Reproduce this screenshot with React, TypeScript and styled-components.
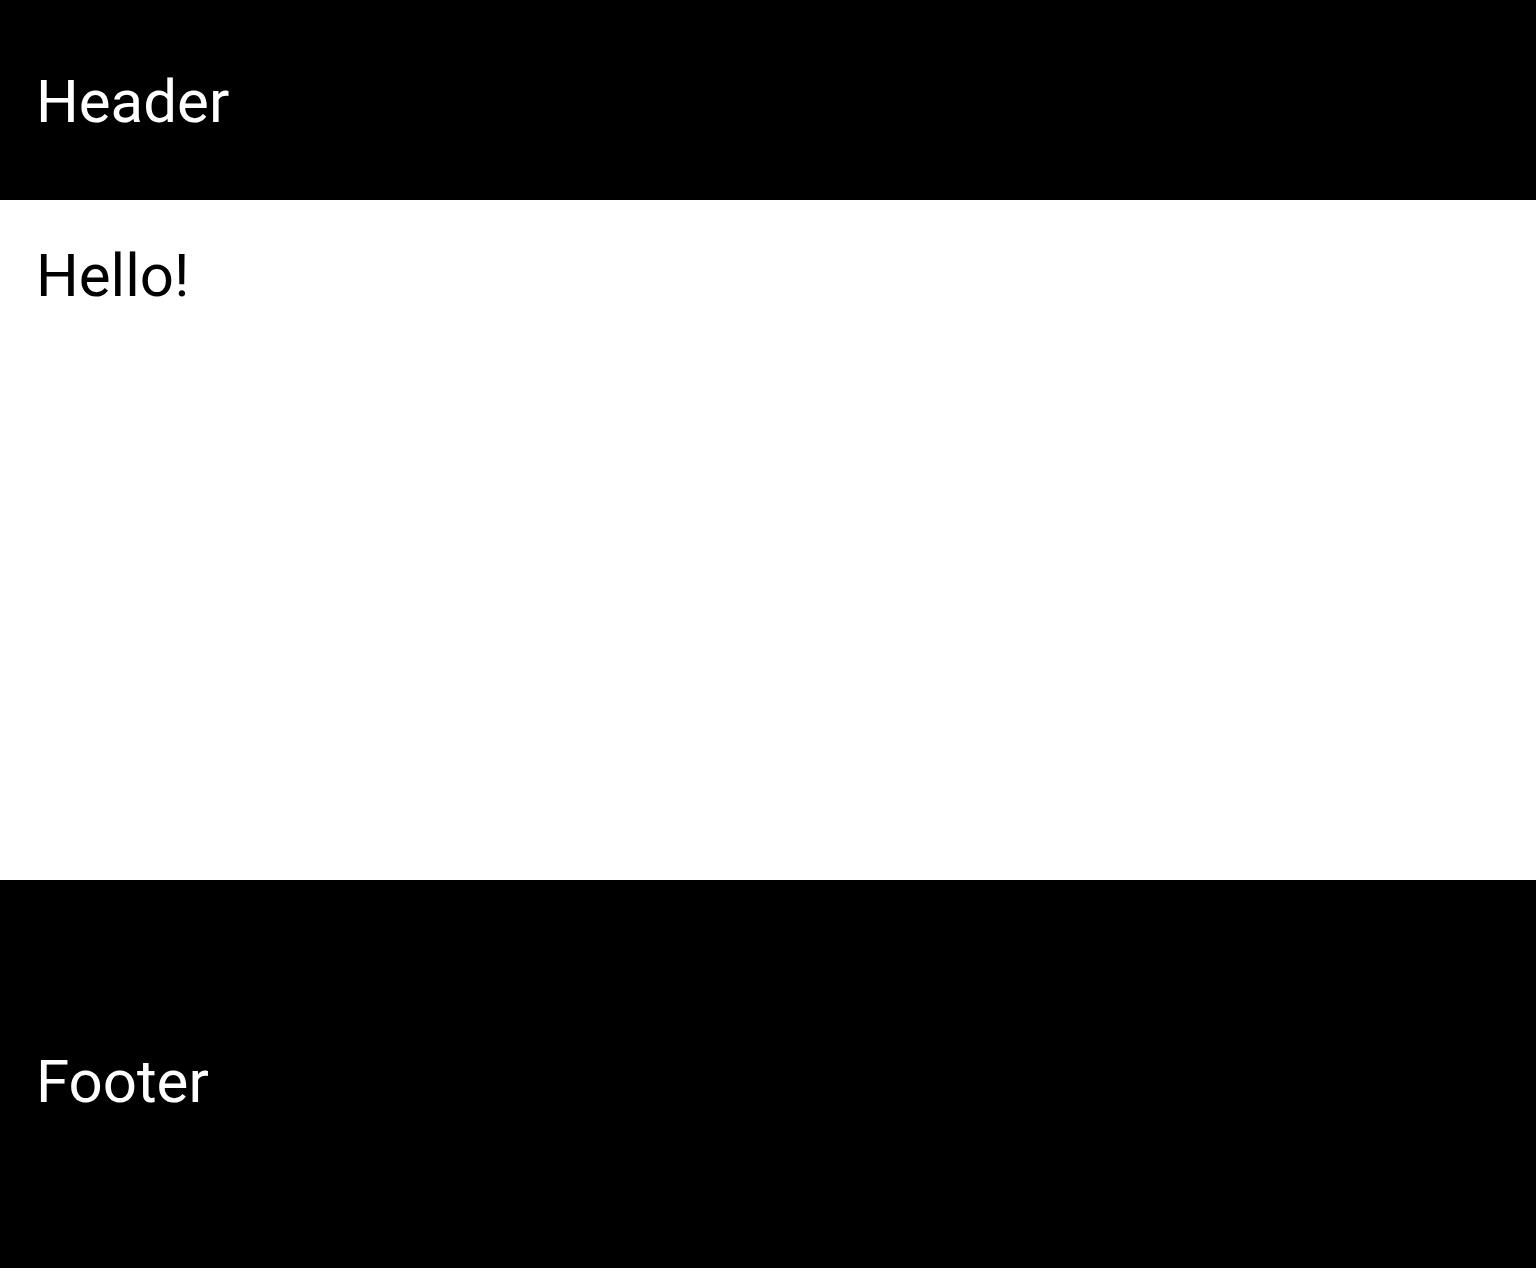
import React from "react";
import styled, { createGlobalStyle } from "styled-components";

const Global = createGlobalStyle`
  html, body { margin: 0; padding: 0; }
  body { font-family: Roboto, "Noto Sans", sans-serif; }
`;

const Page = styled.div`
  display: flex;
  flex-direction: column;
  min-height: 100vh;
`;

const Header = styled.header`
  height: 200px;
  background: #000;
  color: #fff;
  padding: 72px 36px 0;
  box-sizing: border-box;
`;

const Main = styled.main`
  height: 680px;
  background: #fff;
  color: #000;
  padding: 46px 36px 0;
  box-sizing: border-box;
`;

const Footer = styled.footer`
  flex: 1;
  min-height: 388px;
  background: #000;
  color: #fff;
  padding: 172px 36px 0;
  box-sizing: border-box;
`;

const Title = styled.div`
  font-size: 60px;
  font-weight: 400;
  line-height: 60px;
`;

export default function App() {
  return (
    <>
      <Global />
      <Page>
        <Header>
          <Title>Header</Title>
        </Header>
        <Main>
          <Title>Hello!</Title>
        </Main>
        <Footer>
          <Title>Footer</Title>
        </Footer>
      </Page>
    </>
  );
}
